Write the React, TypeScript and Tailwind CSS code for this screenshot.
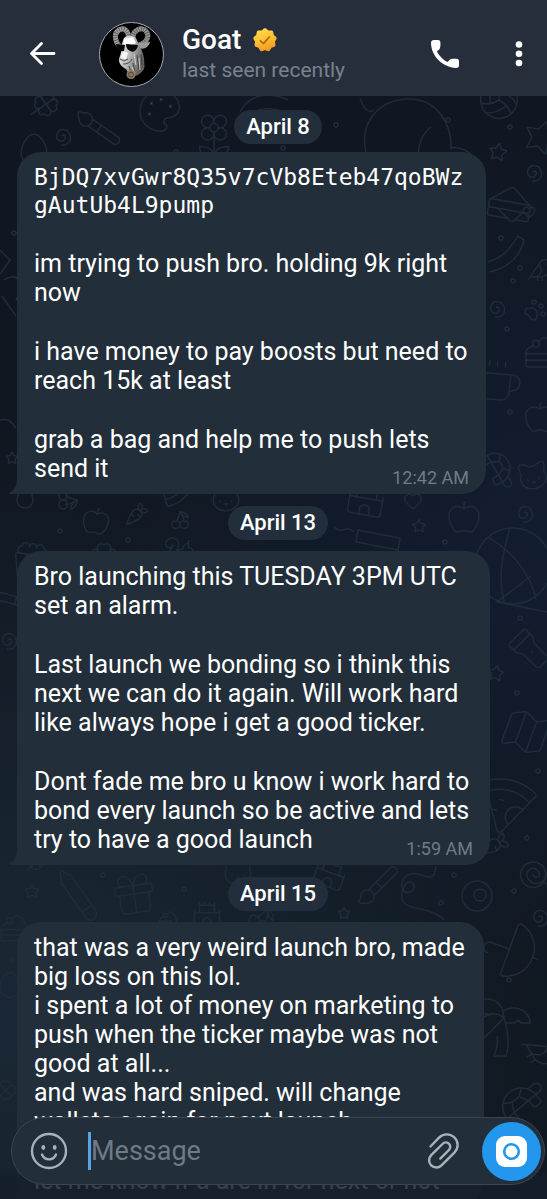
import React from 'react';
import {
  Apple, Bird, Brush, CakeSlice, Carrot, Castle, Cat, Cherry, Clover, Coffee, Egg, Flashlight, Flower2, Gift,
  Heart, Lollipop, Map, Palette, PawPrint, Pencil, Pizza, Popcorn, Sandwich, Squirrel, Star, TreePalm, Turtle,
  Umbrella, Volleyball, type LucideIcon,
} from 'lucide-react';

interface Message {
  id: number;
  date: string;
  time: string;
  width: string;
  code?: string;
  paragraphs: string[];
}

const messages: Message[] = [
  {
    id: 1,
    date: 'April 8',
    time: '12:42 AM',
    width: 'max-w-[469px]',
    code: 'BjDQ7xvGwr8Q35v7cVb8Eteb47qoBWzgAutUb4L9pump',
    paragraphs: [
      'im trying to push bro. holding 9k right now',
      'i have money to pay boosts but need to reach 15k at least',
      'grab a bag and help me to push lets send it',
    ],
  },
  {
    id: 2,
    date: 'April 13',
    time: '1:59 AM',
    width: 'max-w-[473px]',
    paragraphs: [
      'Bro launching this TUESDAY 3PM UTC set an alarm.',
      'Last launch we bonding so i think this next we can do it again. Will work hard like always hope i get a good ticker.',
      'Dont fade me bro u know i work hard to bond every launch so be active and lets try to have a good launch',
    ],
  },
  {
    id: 3,
    date: 'April 15',
    time: '',
    width: 'max-w-[467px]',
    paragraphs: [
      'that was a very weird launch bro, made big loss on this lol.\ni spent a lot of money on marketing to push when the ticker maybe was not good at all...\nand was hard sniped. will change wallets again for next launch',
      'let me know if u are in for next or not',
    ],
  },
];

// icon, centre x, centre y, size, rotation
const doodles: [LucideIcon, number, number, number, number][] = [
  [Clover, 46, 104, 30, 10],
  [Brush, 98, 128, 46, 80],
  [Palette, 160, 111, 48, -10],
  [Flower2, 214, 136, 50, 0],
  [Egg, 34, 150, 38, 0],
  [Volleyball, 499, 100, 44, 20],
  [Star, 498, 152, 20, 10],
  [Star, 541, 137, 38, 20],
  [Sandwich, 510, 204, 50, 10],
  [Heart, 529, 212, 14, 0],
  [Bird, 540, 270, 28, 0],
  [PawPrint, 535, 310, 24, 0],
  [CakeSlice, 541, 352, 40, 0],
  [Coffee, 500, 382, 48, 5],
  [Apple, 540, 417, 34, 0],
  [Turtle, 500, 470, 46, 60],
  [Cat, 533, 476, 34, -10],
  [Star, 12, 458, 14, 0],
  [Egg, 25, 498, 24, 0],
  [Cherry, 68, 500, 22, 90],
  [Apple, 96, 521, 30, 10],
  [Carrot, 137, 514, 26, 0],
  [Cherry, 180, 520, 20, 0],
  [Pizza, 176, 488, 44, 180],
  [Cat, 226, 498, 34, 0],
  [Squirrel, 180, 552, 34, 0],
  [Clover, 104, 556, 32, 0],
  [Castle, 366, 500, 40, 10],
  [Heart, 413, 501, 20, 0],
  [Star, 419, 526, 15, 0],
  [Apple, 464, 517, 36, 0],
  [Popcorn, 31, 562, 44, 8],
  [Pencil, 6, 598, 34, 60],
  [Flashlight, 530, 650, 46, -45],
  [Star, 496, 673, 18, 10],
  [Map, 526, 732, 52, 20],
  [Pizza, 508, 798, 62, 60],
  [Carrot, 494, 845, 34, 20],
  [Lollipop, 535, 876, 38, -10],
  [Star, 32, 891, 16, 0],
  [Clover, 36, 862, 20, 0],
  [Pencil, 78, 896, 52, 100],
  [Gift, 134, 894, 50, -8],
  [Castle, 207, 914, 30, 0],
  [CakeSlice, 168, 920, 22, 0],
  [Cat, 238, 872, 34, 0],
  [Cherry, 262, 918, 26, 30],
  [Brush, 378, 886, 46, 0],
  [Castle, 330, 874, 34, 20],
  [Star, 344, 913, 14, 0],
  [CakeSlice, 14, 928, 34, 0],
  [Umbrella, 512, 950, 66, 110],
  [TreePalm, 500, 1026, 72, 0],
  [Turtle, 522, 1100, 56, -40],
  [Bird, 542, 1052, 40, 60],
  [Egg, 10, 985, 30, 0],
  [Clover, 6, 1090, 24, 0],
];

const swirls = [[62, 136], [533, 172], [496, 308], [524, 513], [539, 917], [8, 640]];

const dots = [
  [336, 125], [448, 120], [510, 127], [176, 152], [283, 148], [501, 238], [513, 281], [520, 268], [507, 329],
  [510, 412], [60, 531], [128, 540], [445, 542], [520, 618], [517, 693], [538, 771], [527, 838], [103, 875],
  [184, 889], [454, 875], [441, 903], [514, 891], [509, 980], [14, 233], [12, 960],
];

const Wallpaper: React.FC = () => (
  <svg className="absolute inset-0 w-full h-full" aria-hidden="true" fill="none" stroke="#202c39" strokeWidth="1.5">
    {doodles.map(([Icon, x, y, size, rotation], i) => (
      <g key={i} transform={`rotate(${rotation} ${x} ${y})`}>
        <Icon x={x - size / 2} y={y - size / 2} size={size} color="#202c39" strokeWidth={1.5} absoluteStrokeWidth />
      </g>
    ))}
    {swirls.map(([x, y]) => (
      <path key={`${x}-${y}`} d={`M${x} ${y}c2-3 5 1 2 4s-9 0-7-6 11-6 13 1-3 11-9 10`} />
    ))}
    {dots.map(([x, y]) => (
      <circle key={`${x}-${y}`} cx={x} cy={y} r="2" />
    ))}
    <path d="M368 160c-12-36 10-61 42-61 24 0 42 22 41 50M418 158c0-14 4-24 13-31M450 148c10-2 22 4 24 12M360 98c4 12 10 16 14 12" />
    <path d="M240 112c8-16 26-22 48-12M244 120c10-12 24-14 40-8" />
    <circle cx="513" cy="566" r="38" />
    <path d="M488 537c24 14 42 36 48 62M510 528c-8 28-12 48-6 74M547 612l-50-10 34-26" />
    <path d="M358 530l42 8-2 12-42-8zM354 532c-8-8-14 4-20-6" />
    <path d="M488 262c18-6 22-14 30-26l6 4c-4 18-18 28-34 32" />
    <circle cx="477" cy="896" r="15" />
    <circle cx="480" cy="895" r="6" />
    <path d="M404 886c6-10 16 2 6 6s-12-14 0-18 24 14 26-8M404 886c-12 30 24 16 40 34" />
    <path d="M0 250l10 10-10 14M4 280c14-10 22 4 12 20M2 296l14 20M0 420c8-2 12 2 16 8" />
  </svg>
);

// scalloped outline of the verified badge
const badgePath = (() => {
  const points: string[] = [];
  for (let i = 0; i < 120; i++) {
    const angle = (i / 120) * Math.PI * 2;
    const radius = 11 + 0.8 * Math.cos(angle * 9);
    points.push(`${(12 + radius * Math.sin(angle)).toFixed(2)} ${(12 - radius * Math.cos(angle)).toFixed(2)}`);
  }
  return `M${points.join('L')}Z`;
})();

const VerifiedBadge: React.FC = () => (
  <svg className="w-6 h-6" viewBox="0 0 24 24" role="img" aria-label="Verified">
    <defs>
      <linearGradient id="gold" x1="0" y1="0" x2="0.4" y2="1">
        <stop offset="0" stopColor="#ffe055" />
        <stop offset="0.5" stopColor="#fbc637" />
        <stop offset="1" stopColor="#f3a01f" />
      </linearGradient>
    </defs>
    <path d={badgePath} fill="url(#gold)" />
    <path d="M7.5 12.8l3 2.8 5.8-6.6" fill="none" stroke="#b96a10" strokeWidth="1.8" strokeLinecap="round" strokeLinejoin="round" />
  </svg>
);

const GoatAvatar: React.FC = () => (
  <svg className="w-[65px] h-[65px]" viewBox="0 0 65 65" role="img" aria-label="Goat">
    <defs>
      <linearGradient id="fur" x1="0" y1="0" x2="1" y2="0.5">
        <stop offset="0" stopColor="#f4f4f4" />
        <stop offset="0.5" stopColor="#bdbdbd" />
        <stop offset="1" stopColor="#5c5c5c" />
      </linearGradient>
    </defs>
    <circle cx="32.5" cy="32.5" r="32" fill="#000" stroke="#a5a8ac" />
    <g fill="none">
      <path d="M29 18C31 9 25 5 20 8c-5 3-5 10 1 17" stroke="#9c9c9c" strokeWidth="5" />
      <path d="M34 17C33 8 43 4 47 9c4 5 1 12-7 14" stroke="#929292" strokeWidth="5" />
      <path d="M29 18C31 9 25 5 20 8c-5 3-5 10 1 17M34 17C33 8 43 4 47 9c4 5 1 12-7 14" stroke="#484848" strokeWidth="5" strokeDasharray="0.6 1.8" />
    </g>
    <path d="M39 21l12-1c-1 5-6 8-11 6z" fill="#9a9a9a" />
    <path d="M25 16c3-3 9-3 12 0l4 9c4 7 5 14 4 20-1 5-5 8-9 9-4-1-7-3-9-7-4-2-7-5-7-9 0-3 2-5 2-8 0-5 1-10 3-14z" fill="url(#fur)" />
    <path d="M25 17l9-2 3 6-6 3-6-2z" fill="#fff" />
    <path d="M17 22l9 1-1 6c-4 1-7-1-8-7zM27 22l12 1c-1 6-5 8-8 6-2-1-4-3-4-7z" fill="#080808" />
    <path d="M24 29l5 2-2 6-5-1z" fill="#fafafa" />
    <path d="M21 37l4 2 4-2M24 42c4 0 7-1 9-5M38 33l2 14M42 32l1 11M34 41l2 9M30 44l2 6" fill="none" stroke="#3a3a3a" strokeWidth="0.9" />
    <path d="M35 32l2 11M40 36l1 12M33 45l3 6" fill="none" stroke="#dedede" strokeWidth="0.8" />
    <path d="M45 43c0 6-5 9-12 9" fill="none" stroke="#6f6453" strokeWidth="1.2" />
    <circle cx="32" cy="52.5" r="4.5" fill="#8d7a5c" />
    <circle cx="32" cy="52.5" r="2.4" fill="none" stroke="#524635" />
  </svg>
);

const Header: React.FC = () => (
  <header className="relative z-10 flex items-center h-24 pt-3 pl-7 pr-3 bg-[#262e3b]">
    <button type="button" aria-label="Back" className="w-7 shrink-0">
      <svg className="w-7 h-7" viewBox="0 0 28 28" fill="none" stroke="#fff" strokeWidth="2.8" strokeLinecap="round" strokeLinejoin="round">
        <path d="M26 13.5H3.5M13.5 3.5l-10 10 10 10" />
      </svg>
    </button>
    <div className="ml-[43px] shrink-0">
      <GoatAvatar />
    </div>
    <div className="ml-[18px] min-w-0 flex-1">
      <h1 className="flex items-center gap-3 text-[28px] leading-8 font-medium">
        Goat
        <VerifiedBadge />
      </h1>
      <p className="text-[21px] leading-7 text-[#78838f] truncate">last seen recently</p>
    </div>
    <button type="button" aria-label="Call" className="w-7 shrink-0">
      <svg className="w-7 h-7" viewBox="0 0 28 28" fill="#fff">
        <path d="M3 0H7C8.8 0 9.3 1 9.4 2.6C9.5 4.6 9.6 7 8.6 9C8 10 6.8 10.5 6 11.2C7.8 15.5 12.3 20.2 16.8 22C17.6 21.2 18.2 19.8 19.4 19.3C21.2 18.5 23.4 18.7 25.4 18.8C27.4 18.9 28 19.6 28 21.4V25.2C28 27.2 27 28 25 27.9C11.5 27.2 .4 16.5 0 3C0 1 1 0 3 0Z" />
      </svg>
    </button>
    <button type="button" aria-label="More options" className="ml-12 w-7 shrink-0">
      <svg className="w-7 h-7" viewBox="0 0 28 28" fill="#fff">
        <circle cx="12" cy="4.5" r="3.3" />
        <circle cx="12" cy="13.7" r="3.3" />
        <circle cx="12" cy="23" r="3.3" />
      </svg>
    </button>
  </header>
);

const MessageBubble: React.FC<{ message: Message }> = ({ message }) => (
  <article className={`relative w-full ${message.width} rounded-3xl rounded-bl-none bg-[#222e39] pl-[17px] pr-3 py-[11px]`}>
    <svg className="absolute -left-2 bottom-0 w-2 h-4" viewBox="0 0 8 16" fill="#222e39" aria-hidden="true">
      <path d="M8 0C8 7 6 12 .6 14.5C-.2 15 0 16 1 16H8Z" />
    </svg>
    <div className="flex flex-col gap-[30px] text-[25px] leading-[29px]">
      {message.code && (
        <code className="font-['DejaVu_Sans_Mono',monospace] text-[23px] leading-7 break-all">{message.code}</code>
      )}
      {message.paragraphs.map((text, i) => (
        <p key={text} className="whitespace-pre-line">
          {text}
          {message.time && i === message.paragraphs.length - 1 && (
            <time className="float-right mt-3 mr-[5px] -mb-3 text-lg leading-6 text-[#6f7b88]">{message.time}</time>
          )}
        </p>
      ))}
    </div>
  </article>
);

const Composer: React.FC = () => (
  <footer className="absolute inset-x-0 bottom-0 pl-[11px] pr-[2px] pb-[14px] bg-linear-to-b from-transparent to-[#141e2b]/85 from-60% to-75%">
    <form className="flex items-center h-[68px] rounded-full border border-[#3b444f] bg-[#222e39] pl-[18px] pr-[3px]">
      <button type="button" aria-label="Emoji" className="shrink-0">
        <svg className="w-[38px] h-[38px]" viewBox="0 0 38 38" fill="none" stroke="#a9b2bb" strokeWidth="2.4" strokeLinecap="round">
          <circle cx="19" cy="19" r="17" />
          <path d="M12 22.5c2.5 6.5 11.5 6.5 14 0" />
          <ellipse cx="13.3" cy="15.5" rx="1.9" ry="2.4" fill="#a9b2bb" stroke="none" />
          <ellipse cx="24.7" cy="15.5" rx="1.9" ry="2.4" fill="#a9b2bb" stroke="none" />
        </svg>
      </button>
      <input
        type="text"
        aria-label="Message"
        placeholder="Message"
        className="ml-5 min-w-0 flex-1 h-[38px] border-l-[3px] border-[#5aa3e0] bg-transparent text-[27px] text-white placeholder:text-[#6f7a86] outline-none"
      />
      <button type="button" aria-label="Attach" className="shrink-0">
        <svg className="w-9 h-9" viewBox="0 0 36 36" fill="none" stroke="#a9b2bb" strokeWidth="2.4" strokeLinecap="round" strokeLinejoin="round">
          <path d="M4.5 13.5L13 4.7C17.5 0 24.5 .6 28.5 4.5C32.5 8.5 32.8 15 28.6 19.3L15.5 32.3C12.6 35.2 8 35.2 5.2 32.4C2.4 29.6 2.4 25 5.2 22.2L16.5 11C18.4 9.1 21.3 9.1 23 10.8C24.7 12.5 24.7 15.2 22.8 17.1L14.3 25.6" />
        </svg>
      </button>
      <button type="button" aria-label="Record video" className="ml-5 flex items-center justify-center w-[59px] h-[59px] shrink-0 rounded-full bg-[#2397ee]">
        <svg className="w-[31px] h-[31px]" viewBox="0 0 31 31">
          <rect width="31" height="31" rx="9" fill="#fff" />
          <circle cx="15.5" cy="15.5" r="7.3" fill="none" stroke="#2397ee" strokeWidth="2.6" />
        </svg>
      </button>
    </form>
  </footer>
);

const App: React.FC = () => {
  return (
    <div className="relative flex flex-col h-screen overflow-hidden bg-[radial-gradient(circle_at_0%_85%,#1a2835_0%,transparent_50%),radial-gradient(circle_at_100%_45%,#131d30_0%,transparent_50%),linear-gradient(#101722,#101820)] font-[Roboto,sans-serif] text-white">
      <Wallpaper />
      <Header />
      <main className="relative flex-1 min-h-0 overflow-hidden pt-[14px] pl-[17px] pr-2">
        {messages.map((message) => (
          <section key={message.id} className="flex flex-col mb-3 gap-[11px] first:gap-2">
            <h2 className="self-center rounded-full bg-[#232e3c] px-3 text-[22px] leading-[34px] font-medium">{message.date}</h2>
            <MessageBubble message={message} />
          </section>
        ))}
      </main>
      <Composer />
    </div>
  );
};

export default App;
